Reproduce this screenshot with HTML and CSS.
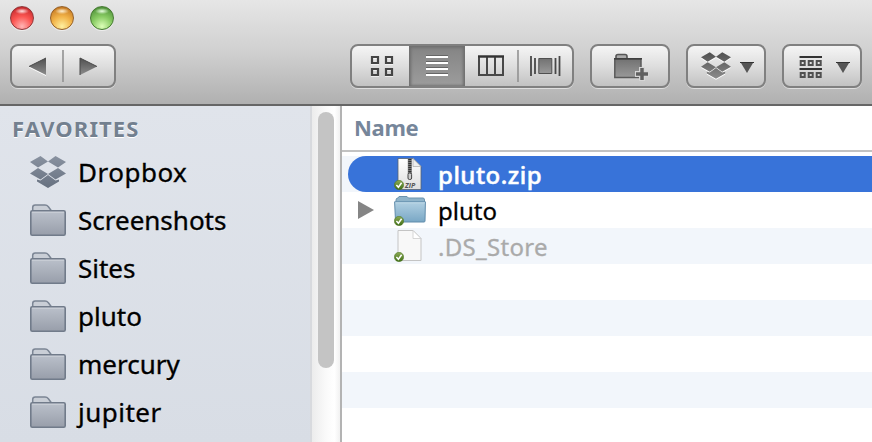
FILE: index.html
```
<!DOCTYPE html>
<html lang="en">
<head>
<meta charset="utf-8">
<title>Finder</title>
<link rel="stylesheet" href="styles.css">
</head>
<body>
<svg class="defs" width="0" height="0" aria-hidden="true">
  <defs>
    <linearGradient id="steel" x2="0" y2="1"><stop stop-color="#8992a0"/><stop offset="1" stop-color="#677180"/></linearGradient>
    <linearGradient id="folderFill" x2="0" y2="1"><stop stop-color="#bbc1cb"/><stop offset="1" stop-color="#989eaa"/></linearGradient>
    <linearGradient id="dark" x2="0" y2="1"><stop stop-color="#505050"/><stop offset="1" stop-color="#8c8c8c"/></linearGradient>
    <linearGradient id="mid" x2="0" y2="1"><stop stop-color="#727272"/><stop offset="1" stop-color="#999"/></linearGradient>
    <linearGradient id="blue" x2="0" y2="1"><stop stop-color="#b1d0e2"/><stop offset="1" stop-color="#79a7c5"/></linearGradient>
    <linearGradient id="paper" x2="0" y2="1"><stop stop-color="#fff"/><stop offset="1" stop-color="#dedede"/></linearGradient>
    <linearGradient id="green" x2="0" y2="1"><stop stop-color="#8cab55"/><stop offset="1" stop-color="#3f6e15"/></linearGradient>
    <symbol id="box" viewBox="0 0 36 34">
      <path d="M10.500 1 18 6.500 8 12.500 0 7zM25.500 1 36 7 28 12.500 18 6.500zM8 13 18 19 10.500 24.500 0 18.500zM28 13 36 18.500 25.500 24.500 18 19zM18 20 25.500 25.500 29 24.500V26.500L18 33 7 26.500V24.500L10.500 25.500z"/>
    </symbol>
    <symbol id="folder" viewBox="0 0 36 32">
      <path d="M2.700 7V3.500Q2.700 1 5.200 1H15q2 0 3.400 1.700L21.500 7" fill="#c9ced6" stroke="#7b8594" stroke-width="1.500"/>
      <rect x=".8" y="6.800" width="34.400" height="24.400" rx="1.500" fill="url(#folderFill)" stroke="#717b8a" stroke-width="1.600"/>
      <path d="M2 8.300H34" stroke="#cbd0d8"/>
    </symbol>
    <symbol id="check" viewBox="0 0 10 10">
      <circle cx="5" cy="5" r="4.700" fill="url(#green)" stroke="#49721f" stroke-width=".5"/>
      <path d="M2.400 5 4.400 7.200 7.600 2.800" fill="none" stroke="#fff" stroke-width="1.500"/>
    </symbol>
  </defs>
</svg>
<div class="window">
  <header class="toolbar">
    <div class="lights"><i class="light red"></i><i class="light amber"></i><i class="light lime"></i></div>
    <div class="controls">
      <div class="button nav">
        <svg width="102" height="40" viewBox="0 0 102 40">
          <path d="M34 12V29L17 20.500z" transform="translate(0 1)" fill="#fff"/><path d="M34 12V29L17 20.500zM68 12V29L85 20.500z" fill="url(#dark)"/>
          <path d="M34 12 17 20.500M68 12 85 20.500M68 12V29" stroke="#484848"/>
          <path d="M51 4V36" stroke="#929292" stroke-width="1.600"/>
        </svg>
      </div>
      <div class="button views">
        <div class="view icons"><svg width="56" height="40" viewBox="0 0 56 40"><path d="M19 11h6v6h-6zM33 11h6v6h-6zM19 23h6v6h-6zM33 23h6v6h-6z" transform="translate(0 1)" fill="none" stroke="#fff" stroke-width="2" opacity=".6"/><path d="M19 11h6v6h-6zM33 11h6v6h-6zM19 23h6v6h-6zM33 23h6v6h-6z" fill="none" stroke="#454545" stroke-width="2.200"/></svg></div>
        <div class="view list"><svg width="56" height="40" viewBox="0 0 56 40"><path d="M17 10H39M17 16H39M17 22H39M17 28H39" stroke="#666" stroke-width="2"/><path d="M17 11H39M17 17H39M17 23H39M17 29H39" stroke="#fff" stroke-width="2.200"/></svg></div>
        <div class="view columns"><svg width="52" height="40" viewBox="0 0 52 40"><path d="M14 10.500h24v18.500H14zM22 11V29M30 11V29" fill="none" stroke="#484848" stroke-width="2"/><path d="M13 10.500H39" stroke="#333" stroke-width="2"/></svg></div>
        <div class="view flow"><svg width="55" height="40" viewBox="0 0 55 40"><path d="M1 4V36" stroke="#929292" stroke-width="1.600"/><path d="M14 10V30M42.500 10V30M18 12V28M38.500 12V28" stroke="#484848" stroke-width="1.800"/><path d="M21.800 12.500h13v15h-13z" fill="url(#mid)" stroke="#505050"/></svg></div>
      </div>
      <div class="button single">
        <svg width="76" height="40" viewBox="0 0 76 40"><path d="M24 13V10.500q0-2 2-2h7q2 0 2 2V13" fill="#aaa" stroke="#555" stroke-width="1.600"/><path d="M22.800 13H49v18.500H22.800z" fill="url(#mid)" stroke="#5a5a5a" stroke-width="1.500"/><path d="M22 12.800H50" stroke="#3f3f3f" stroke-width="1.500"/><path d="M50 21V35M43 28H57" stroke="#d5d5d5" stroke-width="6"/><path d="M50 22V34M44 28H56" stroke="#606060" stroke-width="3.500"/></svg>
      </div>
      <div class="button single">
        <svg width="76" height="40" viewBox="0 0 76 40"><use href="#box" x="13" y="6" width="30" height="29" fill="#fff"/><use href="#box" x="13" y="5" width="30" height="29" fill="url(#dark)"/><path d="M53 17H65L59 27z" fill="#555"/><path d="M52 16.500H66" stroke="#333"/></svg>
      </div>
      <div class="button single">
        <svg width="76" height="40" viewBox="0 0 76 40"><path d="M15.500 11H38M15.500 23H38" stroke="#333" stroke-width="2"/><path d="M16.700 15h4v4h-4zM24.700 15h4v4h-4zM32.700 15h4v4h-4zM16.700 27h4v4h-4zM24.700 27h4v4h-4zM32.700 27h4v4h-4z" fill="none" stroke="#505050" stroke-width="2"/><path d="M53 17H65L59 27z" fill="#555"/><path d="M52 16.500H66" stroke="#333"/></svg>
      </div>
    </div>
  </header>
  <div class="body">
    <nav class="sidebar">
      <h2>FAVORITES</h2>
      <ul>
        <li><svg width="36" height="34"><use href="#box" fill="url(#steel)"/></svg><span class="wide">Dropbox</span></li>
        <li><svg width="36" height="32"><use href="#folder"/></svg><span>Screenshots</span></li>
        <li><svg width="36" height="32"><use href="#folder"/></svg><span>Sites</span></li>
        <li><svg width="36" height="32"><use href="#folder"/></svg><span>pluto</span></li>
        <li><svg width="36" height="32"><use href="#folder"/></svg><span>mercury</span></li>
        <li><svg width="36" height="32"><use href="#folder"/></svg><span class="wide">jupiter</span></li>
      </ul>
    </nav>
    <div class="scroll"><div class="thumb"></div></div>
    <main class="files">
      <div class="head">Name</div>
      <div class="rows">
        <div class="row stripe"><div class="selected">
          <svg class="file" width="36" height="36" viewBox="0 0 36 36">
            <path d="M6 2.500H21L29 10.500V33.500H6z" fill="url(#paper)" stroke="#59636f" stroke-width=".8"/>
            <path d="M21 2.500V10.500H29z" fill="#eee" stroke="#aaa" stroke-width=".7"/>
            <path d="M17.800 3V18" stroke="#777" stroke-width="4"/><path d="M17.800 3V18" stroke="#333" stroke-width="3" stroke-dasharray="1 1"/>
            <rect x="16" y="17" width="3.600" height="6.500" rx="1.500" fill="#ccc" stroke="#444"/>
            <text x="13" y="31.500" class="ziplabel">ZIP</text>
            <use href="#check" x="2" y="24" width="10" height="10"/>
          </svg><span class="zipname">pluto.zip</span></div></div>
        <div class="row"><svg class="arrow" width="16" height="20"><path d="M0 1V19L16 10z" fill="#858585"/></svg>
          <svg class="file" width="36" height="36" viewBox="0 0 36 36">
            <path d="M4 11V8Q4 6 6 6l1-1.500h8L16.500 6H31q1.500 0 1.500 2v3" fill="#8fb4ca" stroke="#6c93ad"/>
            <path d="M2.600 9.800H33.400L33 29q0 1-1 1H4.500q-1 0-1-1z" fill="url(#blue)" stroke="#608cab"/>
            <path d="M3.500 10.800H33" stroke="#c5deeb" stroke-width=".8"/>
            <use href="#check" x="2" y="24" width="10" height="10"/>
          </svg><span>pluto</span></div>
        <div class="row stripe faded"><svg class="file" width="36" height="36" viewBox="0 0 36 36">
            <path d="M6 2.500H21L29 10.500V32.500H6z" fill="#f8f8f8" stroke="#c4c4c4"/>
            <path d="M21 2.500V10.500H29z" fill="#fff" stroke="#ccc" stroke-width=".8"/>
            <use href="#check" x="2" y="24" width="10" height="10"/>
          </svg><span class="dsname">.DS_Store</span></div>
        <div class="row"></div><div class="row stripe"></div><div class="row"></div><div class="row stripe"></div><div class="row"></div>
      </div>
    </main>
  </div>
</div>
</body>
</html>
```
FILE: styles.css
```
* { box-sizing: border-box; }
body { margin: 0; overflow: hidden; font: 26px/36px "Noto Sans", "Open Sans", sans-serif; color: #000; }
svg { display: block; flex: none; }
.defs { position: absolute; }
.window { width: 872px; height: 442px; display: flex; flex-direction: column; overflow: hidden; }

.toolbar { height: 106px; flex: none; padding: 6px 10px 0; border-bottom: 2px solid #666; background: linear-gradient(#e6e6e6, #d0d0d0 50%, #b0b0b0); }
.lights { display: flex; gap: 16px; height: 38px; }
.light { width: 24px; height: 24px; border-radius: 50%; border: 1.5px solid; box-shadow: 0 1px 0 #eee; }
.red { border-color: #90383a; background: radial-gradient(ellipse 7px 3px at 50% 19%, #ffe0e0, transparent), radial-gradient(circle at 50% 88%, #ffb5b5, #fb5652 45%, #c92b2e 85%); }
.amber { border-color: #946029; background: radial-gradient(ellipse 7px 3px at 50% 19%, #fff0d0, transparent), radial-gradient(circle at 50% 88%, #fff0a0, #f2b348 45%, #c77b24 85%); }
.lime { border-color: #467a32; background: radial-gradient(ellipse 7px 3px at 50% 19%, #e8ffe0, transparent), radial-gradient(circle at 50% 88%, #dcffb8, #88cb63 45%, #52943c 85%); }

.controls { display: flex; gap: 16px; }
.button { height: 44px; border: 2px solid #808080; border-radius: 8px; background: linear-gradient(#f5f5f5, #dedede 50%, #c2c2c2); box-shadow: 0 1px 0 #dedede; display: flex; align-items: center; justify-content: center; overflow: hidden; }
.nav { width: 106px; margin-right: 218px; }
.views { width: 224px; }
.view { height: 100%; display: flex; align-items: center; }
.list { background: linear-gradient(#848484, #9c9c9c); box-shadow: inset 2px 0 3px #707070, inset -2px 0 3px #707070, inset 0 2px 3px #777; }
.single { width: 80px; }

.body { flex: 1; min-height: 0; display: flex; }
.sidebar { width: 310px; padding-top: 6px; background: linear-gradient(#e0e4eb, #d8dde5); }
.sidebar h2 { margin: -2px 0 2px; padding-left: 12px; font-size: 22px; line-height: 36px; font-weight: 700; letter-spacing: 1.1px; color: #73808f; text-shadow: 0 1px 0 #fff; }
.sidebar ul { margin: 0; padding: 0 0 0 30px; list-style: none; }
.sidebar li { height: 48px; display: flex; align-items: center; gap: 12px; text-shadow: 0 1px 0 #edf0f4; }
.sidebar span { white-space: nowrap; -webkit-text-stroke: .35px #000; }
.sidebar .wide { letter-spacing: .5px; }

.scroll { width: 32px; padding: 6px 0 0 6px; border-left: 2px solid #d8dade; border-right: 2px solid #b3b3b3; background: linear-gradient(90deg, #ececec, #fafafa 50%, #fff 80%, #f1f1f1); }
.thumb { width: 16px; height: 256px; border-radius: 8px; background: #c4c4c4; }

.files { flex: 1; background: #fff; }
.head { height: 46px; border-bottom: 2px solid #c2c2c2; padding: 3px 0 0 12px; font-size: 22px; font-weight: 700; letter-spacing: -.3px; color: #76869a; }
.rows { padding-top: 4px; font-size: 24px; }
.row { height: 36px; display: flex; align-items: center; padding-left: 50px; }
.row span { padding-top: 2px; -webkit-text-stroke: .3px; }
.stripe { background: #f2f6fb; }
.row:has(.selected) { padding-left: 6px; }
.selected { flex: 1; height: 36px; padding-left: 44px; border-radius: 18px 0 0 18px; background: #3873d9; color: #fff; display: flex; align-items: center; }
.selected .zipname { font-weight: 500; letter-spacing: .5px; -webkit-text-stroke: .5px; }
.dsname { letter-spacing: .3px; }
.arrow { margin: 0 18px 0 -34px; }
.file { margin-right: 10px; }
.faded { color: #aaa; }
.ziplabel { font: italic 700 7px "Open Sans", sans-serif; fill: #555; }
```
